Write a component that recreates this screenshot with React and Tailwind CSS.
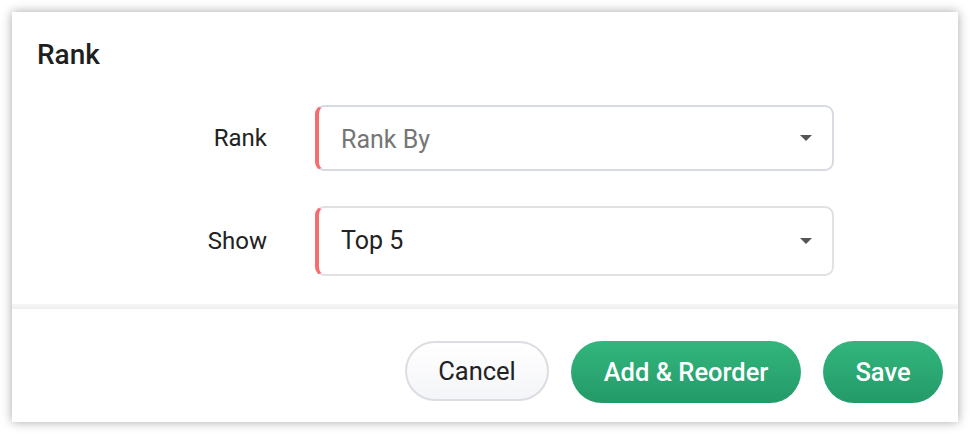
const Caret = () => (
  <svg width="12" height="6" viewBox="0 0 12 6" className="shrink-0">
    <polygon points="0,0 12,0 6,6" fill="#555555" />
  </svg>
);

const SelectBox = ({ value, placeholder, height, borderColor }) => (
  <div
    className={`flex w-[519px] items-center justify-between rounded-[9px] border-2 border-l-[4px] border-l-[#f76c6c] bg-white pl-[22px] pr-[20px] ${height} ${borderColor}`}
  >
    {value ? (
      <span className="text-[25px] text-[#222222]">{value}</span>
    ) : (
      <span className="pt-[3px] text-[25px] text-[#767676]">{placeholder}</span>
    )}
    <Caret />
  </div>
);

const FieldRow = ({ label, children }) => (
  <div className="flex items-center gap-[48px]">
    <div className="w-[255px] text-right text-[24px] text-[#222222]">{label}</div>
    {children}
  </div>
);

export default function App() {
  return (
    <div className="min-h-screen bg-white p-[12px] font-['Roboto',sans-serif]">
      <div className="flex h-[410px] w-[946px] flex-col bg-white shadow-[0_0_10px_rgba(0,0,0,0.35)]">
        {/* Body */}
        <div className="h-[292px] pt-[26px]">
          <h1 className="px-[25px] text-[28px] leading-[34px] font-medium text-[#1f1f1f]">Rank</h1>
          <div className="mt-[33px] flex flex-col gap-[35px]">
            <FieldRow label="Rank">
              <SelectBox placeholder="Rank By" height="h-[66px]" borderColor="border-[#d8dbe1]" />
            </FieldRow>
            <FieldRow label="Show">
              <SelectBox value="Top 5" height="h-[70px]" borderColor="border-[#e1e1e1]" />
            </FieldRow>
          </div>
        </div>

        {/* Footer */}
        <div className="h-[5px] bg-gradient-to-b from-[#f7f7f7] to-[#eeeeee]" />
        <div className="flex flex-1 items-start justify-end gap-[22px] pr-[15px] pt-[32px]">
          <button className="h-[60px] w-[144px] rounded-full border-2 border-[#dcdde2] bg-gradient-to-b from-white to-[#f4f5f8] text-[25.5px] text-[#222222]">
            Cancel
          </button>
          <button className="h-[62px] w-[230px] rounded-full bg-gradient-to-b from-[#33b67d] to-[#239a69] text-[25.5px] font-medium text-white">
            Add &amp; Reorder
          </button>
          <button className="h-[62px] w-[120px] rounded-full bg-gradient-to-b from-[#33b67d] to-[#239a69] text-[25.5px] font-medium text-white">
            Save
          </button>
        </div>
      </div>
    </div>
  );
}
